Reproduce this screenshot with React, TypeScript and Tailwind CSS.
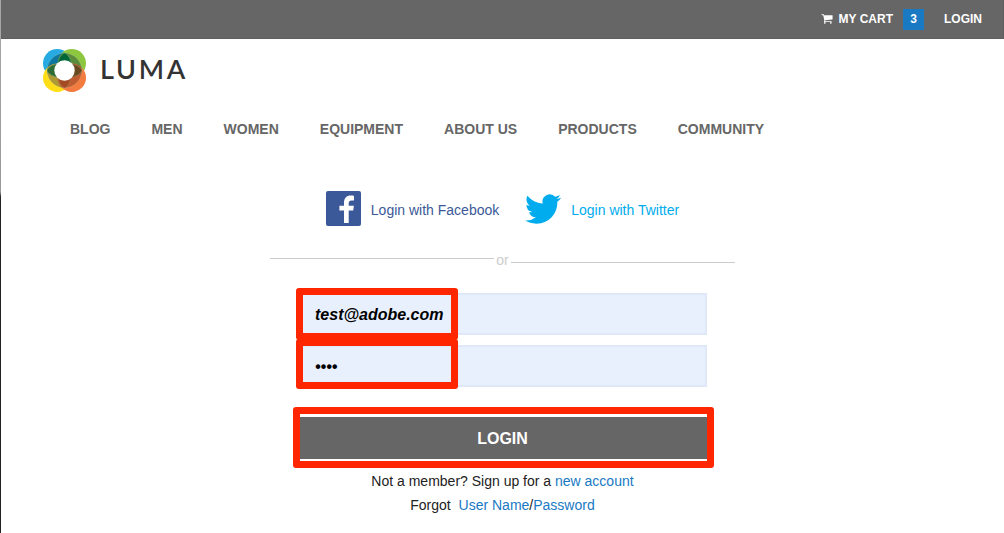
import React from "react";

const navItems = ["BLOG", "MEN", "WOMEN", "EQUIPMENT", "ABOUT US", "PRODUCTS", "COMMUNITY"];

function LumaMark() {
  return (
    <svg width="43" height="43" viewBox="0 0 43 43" aria-hidden="true">
      <defs>
        <clipPath id="ring">
          <circle cx="21.5" cy="21.5" r="17.4" />
        </clipPath>
      </defs>
      <circle cx="14.2" cy="14.2" r="14.2" fill="#27aae1" />
      <circle cx="28.8" cy="14.2" r="14.2" fill="#8dc63f" />
      <circle cx="14.2" cy="28.8" r="14.2" fill="#ffde17" />
      <circle cx="28.8" cy="28.8" r="14.2" fill="#f47b3f" />
      <g clipPath="url(#ring)">
        <circle cx="14.2" cy="14.2" r="14.2" fill="#0e76a0" />
        <circle cx="28.8" cy="14.2" r="14.2" fill="#5b8c3e" />
        <circle cx="14.2" cy="28.8" r="14.2" fill="#ae9a35" />
        <circle cx="28.8" cy="28.8" r="14.2" fill="#bf5b2e" />
        <g stroke="#c9d6b4" strokeOpacity="0.5" strokeWidth="0.5">
          <path d="M3 21.5Q8 15.2 15 14.800V28.200Q8 27.800 3 21.500Z" fill="#2f6b34" />
          <path d="M40 21.500Q35 15.200 28 14.800V28.200Q35 27.800 40 21.500Z" fill="#694a20" />
          <path d="M21.500 40Q15.200 35 14.800 28H28.200Q27.800 35 21.500 40Z" fill="#a34a22" />
          <path d="M21.500 3Q15.200 8 14.800 15H28.200Q27.800 8 21.500 3Z" fill="#006838" />
        </g>
      </g>
      <circle cx="21.5" cy="21.5" r="17.4" fill="none" stroke="#c9d6b4" strokeOpacity="0.5" strokeWidth="0.5" />
      <circle cx="21.5" cy="21.5" r="10.2" fill="#fff" />
    </svg>
  );
}

function CartIcon() {
  return (
    <svg width="12" height="12" viewBox="0 64 1792 1792" fill="currentColor" className="mr-1.5" aria-hidden="true">
      <path d="M704 1536q0 52-38 90t-90 38-90-38-38-90 38-90 90-38 90 38 38 90zm896 0q0 52-38 90t-90 38-90-38-38-90 38-90 90-38 90 38 38 90zm128-1088v512q0 24-16.5 42.5t-40.5 21.5l-1044 122q13 60 13 70 0 16-24 64h920q26 0 45 19t19 45-19 45-45 19h-1024q-26 0-45-19t-19-45q0-11 8-31.5t16-36 21.5-40 15.5-29.5l-177-823h-204q-26 0-45-19t-19-45 19-45 45-19h256q16 0 28.5 6.5t19.5 15.5 13 24.5 8 26 5.5 29.5 4.5 26h1201q26 0 45 19t19 45z" />
    </svg>
  );
}

function FacebookIcon() {
  return (
    <svg width="35" height="35" viewBox="0 0 35 35" aria-hidden="true">
      <rect width="35" height="35" rx="2" fill="#3b5998" />
      <path
        fill="#fff"
        d="M18 32V19.4h-4.6v-4.6H18v-2.6c0-5 2.4-7.6 7-7.6 1.3 0 2.3.1 3 .3v4.6h-2.3c-2.1 0-3 .9-3 2.9v2.4h5.2l-.7 4.6h-4.5V32z"
      />
    </svg>
  );
}

function TwitterIcon() {
  return (
    <svg width="36" height="30" viewBox="0 2 24 20" aria-hidden="true">
      <path
        fill="#00aced"
        d="M23.95 4.57a10 10 0 0 1-2.82.77 4.96 4.96 0 0 0 2.16-2.72c-.95.55-2 .95-3.13 1.18a4.92 4.92 0 0 0-8.38 4.48C7.69 8.1 4.07 6.13 1.64 3.16a4.82 4.82 0 0 0-.67 2.48c0 1.71.87 3.21 2.19 4.1a4.9 4.9 0 0 1-2.23-.62v.06a4.92 4.92 0 0 0 3.95 4.83 5 5 0 0 1-2.21.08 4.94 4.94 0 0 0 4.6 3.42A9.87 9.87 0 0 1 0 19.54a13.99 13.99 0 0 0 7.56 2.21c9.05 0 14-7.5 14-13.98 0-.21 0-.42-.02-.63a9.94 9.94 0 0 0 2.46-2.55z"
      />
    </svg>
  );
}

const fieldClass =
  "block h-[42px] w-full border-2 border-[#dfe8f6] bg-[#e8effd] px-[15px] pt-0.5 text-base font-bold italic text-black outline-none";
const markClass = "pointer-events-none absolute rounded-[3px] border-[7px] border-[#ff2600]";

export default function App() {
  return (
    <div className="flex min-h-screen bg-white font-['Liberation_Sans',Arial,sans-serif] text-sm leading-5 text-[#222]">
      <div className="w-px shrink-0 bg-linear-to-b from-[#a8a8a8] from-0% via-[#999] via-36% to-[#222] to-37%" />
      <div className="min-w-0 grow">
        <header>
          <div className="flex h-[39px] items-center justify-end border-r border-b border-[#5e5e5e] bg-[#666] pr-[21px] text-xs font-bold text-white">
            <a href="#cart" className="flex items-center">
              <CartIcon />
              MY CART
              <span className="ml-2.5 flex size-[21px] items-center justify-center bg-[#1979c3]">3</span>
            </a>
            <a href="#login" className="ml-5">LOGIN</a>
          </div>
          <a href="#home" className="mt-2.5 ml-[42px] inline-flex items-start gap-3.5 align-top">
            <LumaMark />
            <span className="font-['Lato',sans-serif] text-[27px] leading-10 font-semibold tracking-widest text-[#333]">LUMA</span>
          </a>
          <nav className="mt-[27px] flex flex-wrap gap-x-[41px] pl-[69px] font-bold text-[#666]">
            {navItems.map((item) => (
              <a key={item} href="#nav">{item}</a>
            ))}
          </nav>
        </header>

        <main className="mt-[52px] flex flex-col items-center">
          <div className="flex items-center gap-[26px]">
            <a href="#facebook" className="flex items-center gap-2.5 text-[#3b5998]">
              <FacebookIcon />
              <span className="pt-0.5">Login with Facebook</span>
            </a>
            <a href="#twitter" className="flex items-center gap-2.5 text-[#00aced]">
              <TwitterIcon />
              <span className="pt-0.5">Login with Twitter</span>
            </a>
          </div>

          <div className="mt-6 flex w-full max-w-[465px] items-start gap-0.5 text-[#ccc]">
            <span className="mt-2 h-px grow bg-[#ccc]" />
            <span>or</span>
            <span className="mt-3 h-px grow bg-[#ccc]" />
          </div>

          <form className="mt-[23px] w-full max-w-[409px]" onSubmit={(e) => e.preventDefault()}>
            <div className="relative">
              <input type="text" aria-label="User Name" defaultValue="test@adobe.com" className={fieldClass} />
              <span className={`${markClass} -top-[5px] -left-0.5 h-[52px] w-[162px]`} />
            </div>
            <div className="relative mt-2.5">
              <input type="password" aria-label="Password" defaultValue="test" className={fieldClass} />
              <span className={`${markClass} -top-[6px] -left-0.5 h-[50px] w-[162px]`} />
            </div>
            <div className="relative mt-[30px]">
              <button type="submit" className="block h-[42px] w-full bg-[#666] pt-0.5 text-base font-bold text-white">
                LOGIN
              </button>
              <span className={`${markClass} -top-2.5 -right-[7px] -bottom-[9px] -left-[5px]`} />
            </div>
          </form>

          <div className="mt-2.5 text-center leading-6">
            <p>
              Not a member? Sign up for a <a href="#signup" className="text-[#1979c3]">new account</a>
            </p>
            <p>
              Forgot&nbsp; <a href="#username" className="text-[#1979c3]">User Name</a>/
              <a href="#password" className="text-[#1979c3]">Password</a>
            </p>
          </div>
        </main>
      </div>
    </div>
  );
}
